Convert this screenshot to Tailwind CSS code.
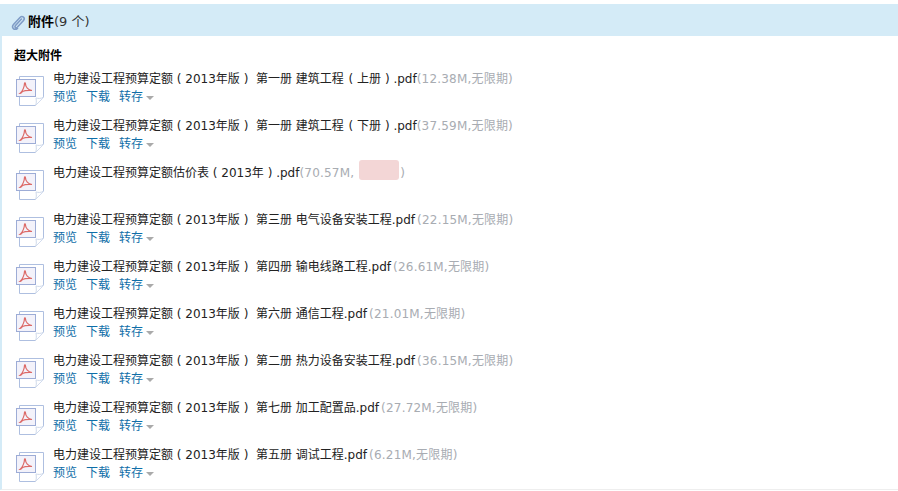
<!DOCTYPE html>
<html lang="zh-CN">
<head>
    <meta charset="UTF-8">
    <title>附件</title>
    <script src="https://cdn.jsdelivr.net/npm/@tailwindcss/browser@4"></script>
</head>
<body class="bg-white h-[491px] overflow-hidden font-['DejaVu_Sans','Noto_Sans_CJK_SC',sans-serif] text-[12px] text-[#222]">
    <svg class="hidden">
        <defs>
            <linearGradient id="page" x1="0" y1="0" x2="1" y2="1">
                <stop offset="0" stop-color="#fbfdff"/>
                <stop offset="1" stop-color="#dfeaf8"/>
            </linearGradient>
        </defs>
        <symbol id="pdf" viewBox="0 0 28 30">
            <path d="M3.500 0.500H27.500V21L19.500 29.500H3.500Z" fill="url(#page)" stroke="#aebfe0"/>
            <path d="M27.500 21C25 23 22 22.500 20 22C20.500 25 20.500 27.500 19.500 29.500" fill="#fff" stroke="#cfdaeb"/>
            <rect x="0.500" y="3.500" width="19" height="17" fill="#f3f2fa" stroke="#9dacd6"/>
            <path d="M4 17.500C6.500 15.500 8.500 10.500 8.500 7.500C8.500 6.500 9.500 6.500 9.500 8C9.500 11 12 14 16 14.500C13.500 14.500 9.500 14 6.500 15.500C5.500 16.500 4.500 17.500 4 17.500Z" fill="none" stroke="#dc6a68" stroke-width="1.200"/>
        </symbol>
    </svg>

    <div id="attach" class="mt-1 border-l-2 border-[#d4ebf7] h-[486px] border-b border-b-[#eeeeee]">
        <div class="h-[32px] bg-[#d4ebf7] flex items-center pl-[9px] pt-[4px] text-[13px]">
            <svg class="w-[15px] h-[15px] mr-[2px]" viewBox="0 0 15 15" fill="none" stroke="#7f9cc6" stroke-width="1.600" stroke-linecap="round">
                <path d="M10.500 4L4.500 10.500C3 12.500 5 13.500 6.500 12L12.500 5.500C14.500 3 11.500 0 9 2.500L2.500 9.500C0 12.500 3.500 16 6.500 13.500"/>
            </svg>
            <b class="font-bold text-black">附件</b><span class="text-[#333]">(9 个)</span>
        </div>
        <div class="pl-[12px] pt-[13px]">
            <div class="font-bold text-black h-[21px] leading-[14px]">超大附件</div>

            <div class="flex h-[47px]">
                <svg class="w-[28px] h-[30px] mt-[6px] ml-[2px] mr-[9px]"><use href="#pdf"/></svg>
                <div>
                    <div class="leading-[18px]">电力建设工程预算定额 ( 2013年版 )&nbsp; 第一册 建筑工程<span class="ml-px"> ( 上册 ) </span>.pdf<span class="text-[#a8acb2] tracking-[0.2px]">(12.38M,无限期)</span></div>
                    <div class="flex text-[#0f6ea8] leading-[18px]"><span class="mr-[9px]">预览</span><span class="mr-[9px]">下载</span><span class="flex items-center">转存<i class="ml-[3px] mt-[2px] border-x-4 border-x-transparent border-t-4 border-t-[#aaa]"></i></span></div>
                </div>
            </div>
            <div class="flex h-[47px]">
                <svg class="w-[28px] h-[30px] mt-[6px] ml-[2px] mr-[9px]"><use href="#pdf"/></svg>
                <div>
                    <div class="leading-[18px]">电力建设工程预算定额 ( 2013年版 )&nbsp; 第一册 建筑工程<span class="ml-px"> ( 下册 ) </span>.pdf<span class="text-[#a8acb2] tracking-[0.2px]">(37.59M,无限期)</span></div>
                    <div class="flex text-[#0f6ea8] leading-[18px]"><span class="mr-[9px]">预览</span><span class="mr-[9px]">下载</span><span class="flex items-center">转存<i class="ml-[3px] mt-[2px] border-x-4 border-x-transparent border-t-4 border-t-[#aaa]"></i></span></div>
                </div>
            </div>
            <div class="flex h-[47px]">
                <svg class="w-[28px] h-[30px] mt-[6px] ml-[2px] mr-[9px]"><use href="#pdf"/></svg>
                <div>
                    <div class="leading-[18px] flex">电力建设工程预算定额估价表 ( 2013年 ) .pdf<span class="text-[#a8acb2] tracking-[0.2px] flex">(70.57M,<i class="w-[40px] h-[20px] ml-[5px] mr-[1px] -mt-[4px] bg-[#f3d6d6] rounded-[3px]"></i>)</span></div>
                </div>
            </div>
            <div class="flex h-[47px]">
                <svg class="w-[28px] h-[30px] mt-[6px] ml-[2px] mr-[9px]"><use href="#pdf"/></svg>
                <div>
                    <div class="leading-[18px]">电力建设工程预算定额 ( 2013年版 )&nbsp; 第三册 电气设备安装工程.pdf<span class="ml-[2px] text-[#a8acb2] tracking-[0.2px]">(22.15M,无限期)</span></div>
                    <div class="flex text-[#0f6ea8] leading-[18px]"><span class="mr-[9px]">预览</span><span class="mr-[9px]">下载</span><span class="flex items-center">转存<i class="ml-[3px] mt-[2px] border-x-4 border-x-transparent border-t-4 border-t-[#aaa]"></i></span></div>
                </div>
            </div>
            <div class="flex h-[47px]">
                <svg class="w-[28px] h-[30px] mt-[6px] ml-[2px] mr-[9px]"><use href="#pdf"/></svg>
                <div>
                    <div class="leading-[18px]">电力建设工程预算定额 ( 2013年版 )&nbsp; 第四册 输电线路工程.pdf<span class="ml-[2px] text-[#a8acb2] tracking-[0.2px]">(26.61M,无限期)</span></div>
                    <div class="flex text-[#0f6ea8] leading-[18px]"><span class="mr-[9px]">预览</span><span class="mr-[9px]">下载</span><span class="flex items-center">转存<i class="ml-[3px] mt-[2px] border-x-4 border-x-transparent border-t-4 border-t-[#aaa]"></i></span></div>
                </div>
            </div>
            <div class="flex h-[47px]">
                <svg class="w-[28px] h-[30px] mt-[6px] ml-[2px] mr-[9px]"><use href="#pdf"/></svg>
                <div>
                    <div class="leading-[18px]">电力建设工程预算定额 ( 2013年版 )&nbsp; 第六册 通信工程.pdf<span class="ml-[2px] text-[#a8acb2] tracking-[0.2px]">(21.01M,无限期)</span></div>
                    <div class="flex text-[#0f6ea8] leading-[18px]"><span class="mr-[9px]">预览</span><span class="mr-[9px]">下载</span><span class="flex items-center">转存<i class="ml-[3px] mt-[2px] border-x-4 border-x-transparent border-t-4 border-t-[#aaa]"></i></span></div>
                </div>
            </div>
            <div class="flex h-[47px]">
                <svg class="w-[28px] h-[30px] mt-[6px] ml-[2px] mr-[9px]"><use href="#pdf"/></svg>
                <div>
                    <div class="leading-[18px]">电力建设工程预算定额 ( 2013年版 )&nbsp; 第二册 热力设备安装工程.pdf<span class="ml-[2px] text-[#a8acb2] tracking-[0.2px]">(36.15M,无限期)</span></div>
                    <div class="flex text-[#0f6ea8] leading-[18px]"><span class="mr-[9px]">预览</span><span class="mr-[9px]">下载</span><span class="flex items-center">转存<i class="ml-[3px] mt-[2px] border-x-4 border-x-transparent border-t-4 border-t-[#aaa]"></i></span></div>
                </div>
            </div>
            <div class="flex h-[47px]">
                <svg class="w-[28px] h-[30px] mt-[6px] ml-[2px] mr-[9px]"><use href="#pdf"/></svg>
                <div>
                    <div class="leading-[18px]">电力建设工程预算定额 ( 2013年版 )&nbsp; 第七册 加工配置品.pdf<span class="ml-[2px] text-[#a8acb2] tracking-[0.2px]">(27.72M,无限期)</span></div>
                    <div class="flex text-[#0f6ea8] leading-[18px]"><span class="mr-[9px]">预览</span><span class="mr-[9px]">下载</span><span class="flex items-center">转存<i class="ml-[3px] mt-[2px] border-x-4 border-x-transparent border-t-4 border-t-[#aaa]"></i></span></div>
                </div>
            </div>
            <div class="flex h-[47px]">
                <svg class="w-[28px] h-[30px] mt-[6px] ml-[2px] mr-[9px]"><use href="#pdf"/></svg>
                <div>
                    <div class="leading-[18px]">电力建设工程预算定额 ( 2013年版 )&nbsp; 第五册 调试工程.pdf<span class="ml-[2px] text-[#a8acb2] tracking-[0.2px]">(6.21M,无限期)</span></div>
                    <div class="flex text-[#0f6ea8] leading-[18px]"><span class="mr-[9px]">预览</span><span class="mr-[9px]">下载</span><span class="flex items-center">转存<i class="ml-[3px] mt-[2px] border-x-4 border-x-transparent border-t-4 border-t-[#aaa]"></i></span></div>
                </div>
            </div>
        </div>
    </div>
</body>
</html>
